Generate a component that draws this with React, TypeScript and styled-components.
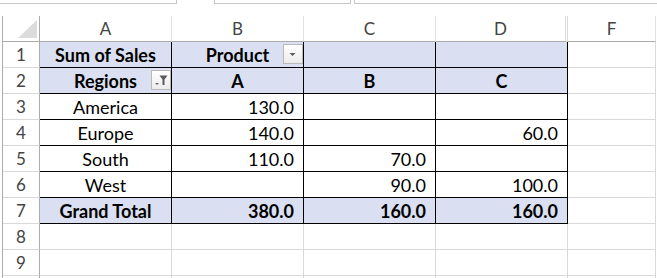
import React from "react";
import styled, { createGlobalStyle } from "styled-components";

const FILL = "#DAE0F1";
const GRID = "#D9D9D9";
const HEAD_LINE = "#ABABAB";

const GlobalStyle = createGlobalStyle`
  html, body {
    margin: 0;
    padding: 0;
    background: #fff;
    font-family: Lato, "Open Sans", sans-serif;
  }
`;

const Page = styled.div`
  width: 657px;
  height: 278px;
  overflow: hidden;
  background: #fff;
`;

const TopStrip = styled.div`
  display: flex;
  height: 4px;
`;

const Field = styled.div<{ $w: number; $left?: boolean; $right?: boolean }>`
  width: ${(p) => p.$w}px;
  flex: none;
  box-sizing: border-box;
  border-bottom: 1px solid #c6c6c6;
  border-left: ${(p) => (p.$left ? "1px solid #c6c6c6" : "none")};
  border-right: ${(p) => (p.$right ? "1px solid #c6c6c6" : "none")};
`;

const Spacer = styled.div<{ $w: number }>`
  width: ${(p) => p.$w}px;
  flex: none;
`;

const Sheet = styled.div`
  margin: 12px 0 0 2px;
  border-left: 1px solid ${HEAD_LINE};
  display: grid;
  grid-template-columns: 37px 132px 132px 132px 132px 88px;
  grid-auto-rows: 26px;
`;

const ColHead = styled.div<{ $hidden?: boolean }>`
  box-sizing: border-box;
  border-bottom: 1px solid ${HEAD_LINE};
  border-right: ${(p) => (p.$hidden ? `3px double ${GRID}` : `1px solid #E1E1E1`)};
  display: flex;
  align-items: flex-end;
  justify-content: center;
  padding-bottom: 2px;
  color: #444;
  font-size: 17px;
  line-height: 20px;
`;

const Corner = styled.div`
  position: relative;
  box-sizing: border-box;
  border-bottom: 1px solid ${HEAD_LINE};
  border-right: 1px solid ${HEAD_LINE};
`;

const CornerMark = styled.svg`
  position: absolute;
  right: 2px;
  bottom: 3px;
`;

const RowHead = styled.div`
  box-sizing: border-box;
  border-bottom: 1px solid ${GRID};
  border-right: 1px solid ${HEAD_LINE};
  display: flex;
  align-items: flex-end;
  justify-content: center;
  padding-bottom: 2px;
  color: #444;
  font-size: 17px;
  line-height: 20px;
`;

const Cell = styled.div<{
  $pivot?: boolean;
  $fill?: boolean;
  $bold?: boolean;
  $align?: "center" | "right";
}>`
  position: relative;
  box-sizing: border-box;
  border-bottom: 1px solid ${(p) => (p.$pivot ? "#000" : GRID)};
  border-right: 1px solid ${(p) => (p.$pivot ? "#000" : GRID)};
  background: ${(p) => (p.$fill ? FILL : "#fff")};
  display: flex;
  align-items: flex-end;
  justify-content: ${(p) => (p.$align === "right" ? "flex-end" : "center")};
  padding: 0 9px 2px 0;
  padding-left: ${(p) => (p.$align === "right" ? "0" : "9px")};
  color: #000;
  font-size: 18px;
  line-height: 20px;
  font-weight: ${(p) => (p.$bold ? 700 : 400)};
  white-space: nowrap;
`;

const DropButton = styled.div`
  position: absolute;
  right: 0;
  top: 2px;
  width: 20px;
  height: 20px;
  box-sizing: border-box;
  border: 1px solid #b9b9b9;
  background: linear-gradient(#ffffff, #ececec);
  display: flex;
  align-items: center;
  justify-content: center;
`;

const DropArrow = () => (
  <svg width="18" height="18" viewBox="0 0 18 18">
    <polygon points="5.5,8 11.5,8 8.5,11" fill="#5a5a5a" />
  </svg>
);

const FilterIcon = () => (
  <svg width="18" height="18" viewBox="0 0 18 18">
    <polygon points="3,12 7,12 5,14" fill="#6a6a6a" />
    <polygon points="7.5,4.5 15.5,4.5 12.5,8.5 12.5,14 10.5,14 10.5,8.5" fill="#5a5a5a" />
  </svg>
);

type Row = {
  label: string;
  b: string;
  c: string;
  d: string;
  total?: boolean;
};

const body: Row[] = [
  { label: "America", b: "130.0", c: "", d: "" },
  { label: "Europe", b: "140.0", c: "", d: "60.0" },
  { label: "South", b: "110.0", c: "70.0", d: "" },
  { label: "West", b: "", c: "90.0", d: "100.0" },
  { label: "Grand Total", b: "380.0", c: "160.0", d: "160.0", total: true },
];

export default function App() {
  return (
    <Page>
      <GlobalStyle />
      <TopStrip>
        <Field $w={177} $right />
        <Spacer $w={37} />
        <Field $w={137} $left $right />
        <Spacer $w={3} />
        <Field $w={303} $left />
      </TopStrip>
      <Sheet>
        <Corner>
          <CornerMark width="19" height="18" viewBox="0 0 19 18">
            <polygon points="19,0 19,18 0,18" fill="#dcdcdc" />
          </CornerMark>
        </Corner>
        <ColHead>A</ColHead>
        <ColHead>B</ColHead>
        <ColHead>C</ColHead>
        <ColHead $hidden>D</ColHead>
        <ColHead>F</ColHead>

        <RowHead>1</RowHead>
        <Cell $pivot $fill $bold>Sum of Sales</Cell>
        <Cell $pivot $fill $bold>
          Product
          <DropButton><DropArrow /></DropButton>
        </Cell>
        <Cell $pivot $fill />
        <Cell $pivot $fill />
        <Cell />

        <RowHead>2</RowHead>
        <Cell $pivot $fill $bold>
          Regions
          <DropButton><FilterIcon /></DropButton>
        </Cell>
        <Cell $pivot $fill $bold>A</Cell>
        <Cell $pivot $fill $bold>B</Cell>
        <Cell $pivot $fill $bold>C</Cell>
        <Cell />

        {body.map((r, i) => (
          <React.Fragment key={r.label}>
            <RowHead>{i + 3}</RowHead>
            <Cell $pivot $fill={r.total} $bold={r.total}>{r.label}</Cell>
            <Cell $pivot $fill={r.total} $bold={r.total} $align="right">{r.b}</Cell>
            <Cell $pivot $fill={r.total} $bold={r.total} $align="right">{r.c}</Cell>
            <Cell $pivot $fill={r.total} $bold={r.total} $align="right">{r.d}</Cell>
            <Cell />
          </React.Fragment>
        ))}

        {["8", "9", ""].map((n, i) => (
          <React.Fragment key={i}>
            <RowHead>{n}</RowHead>
            <Cell />
            <Cell />
            <Cell />
            <Cell />
            <Cell />
          </React.Fragment>
        ))}
      </Sheet>
    </Page>
  );
}
